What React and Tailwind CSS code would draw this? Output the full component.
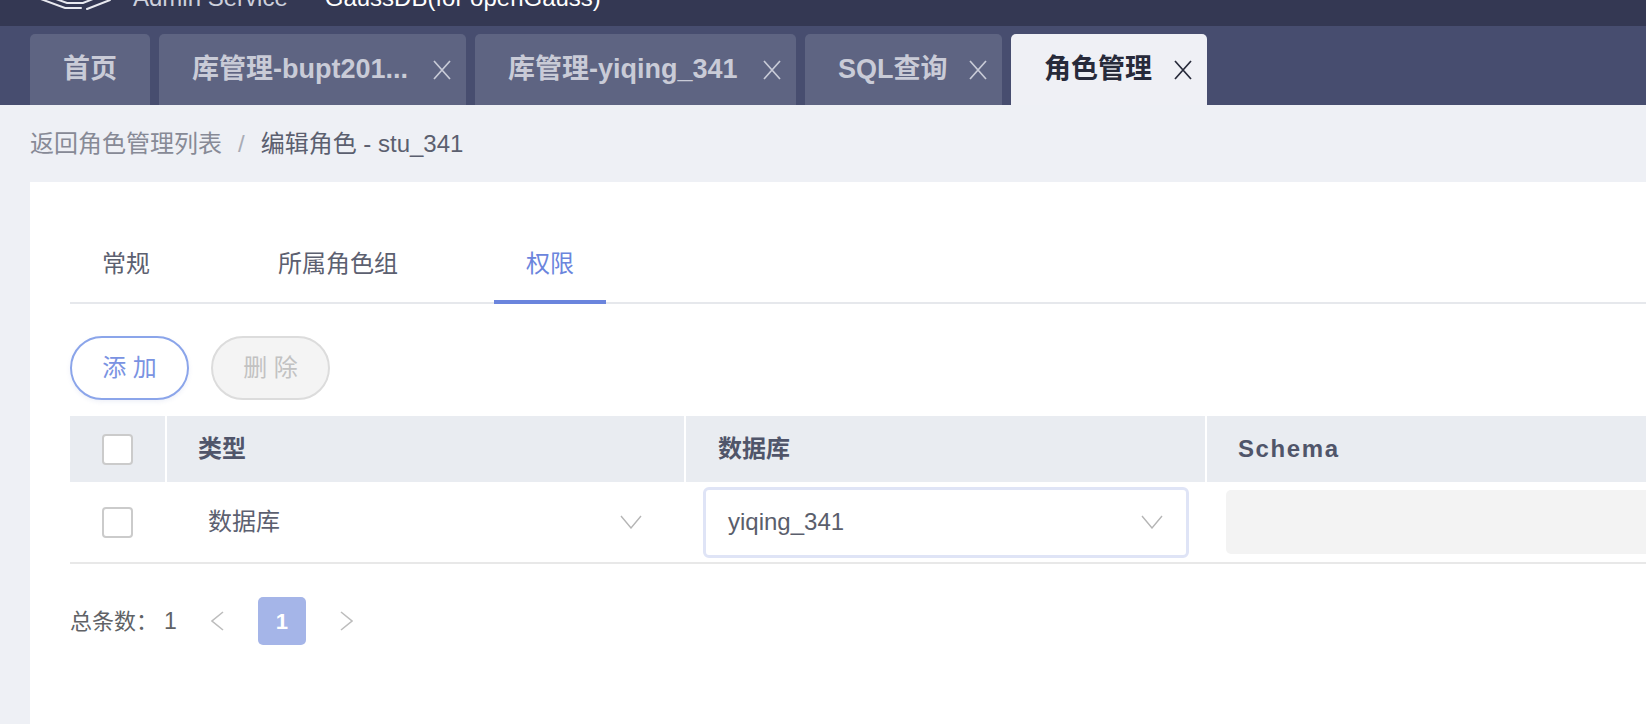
import React from 'react'

const FONT = "font-['Liberation_Sans','Noto_Sans_CJK_SC',sans-serif]"

const OPEN_TABS = [
  { label: '首页', width: 'w-[120px]', closable: false },
  { label: '库管理-bupt201...', width: 'w-[307px]', closable: true },
  { label: '库管理-yiqing_341', width: 'w-[321px]', closable: true },
  { label: 'SQL查询', width: 'w-[197px]', closable: true },
  { label: '角色管理', width: 'w-[196px]', closable: true, active: true },
]

const SUB_TABS = [
  { label: '常规' },
  { label: '所属角色组' },
  { label: '权限', active: true },
]

function CloseIcon() {
  return (
    <svg width="20" height="22" viewBox="0 0 20 22" className="shrink-0">
      <path d="M2 2 L18 20 M18 2 L2 20" stroke="currentColor" strokeWidth="1.7" fill="none" />
    </svg>
  )
}

function Chevron() {
  return (
    <svg width="22" height="14" viewBox="0 0 22 14" className="shrink-0">
      <polyline points="1,1 11,13 21,1" stroke="#b5b5b5" strokeWidth="1.4" fill="none" />
    </svg>
  )
}

function Arrow({ dir }) {
  return (
    <svg width="13" height="20" viewBox="0 0 13 20" className="shrink-0">
      <polyline
        points={dir === 'left' ? '12,1 1,10 12,19' : '1,1 12,10 1,19'}
        stroke="#bdbdbd"
        strokeWidth="1.6"
        fill="none"
      />
    </svg>
  )
}

function Checkbox() {
  return <span className="block w-[31px] h-[31px] rounded-[4px] border-2 border-[#cbcbcb] bg-white" />
}

function Logo() {
  // only the lower edge of the logo is visible in the header
  return (
    <svg width="74" height="24" viewBox="0 0 74 24" className="shrink-0">
      <path d="M1 12 L28 22 L44 22" stroke="#e8e9ef" strokeWidth="2" fill="none" strokeLinecap="round" />
      <path d="M50 23 L73 14" stroke="#e8e9ef" strokeWidth="2" fill="none" strokeLinecap="round" />
      <path d="M8 9 L30 17 L46 17 L66 9" stroke="#e8e9ef" strokeWidth="2" fill="none" strokeLinecap="round" />
    </svg>
  )
}

export default function App() {
  return (
    <div className={`w-[1646px] h-[724px] overflow-hidden flex flex-col bg-[#eef0f5] ${FONT}`}>
      <header className="h-[26px] shrink-0 bg-[#343853] overflow-hidden">
        <div className="-mt-[14px] flex items-start h-[24px]">
          <div className="ml-[37px]">
            <Logo />
          </div>
          <span className="ml-[22px] text-[24px] leading-[24px] text-[#cdd0dc] whitespace-nowrap">Admin Service</span>
          <span className="ml-[37px] text-[24px] leading-[24px] text-white whitespace-nowrap">GaussDB(for openGauss)</span>
        </div>
      </header>

      <nav className="h-[79px] shrink-0 bg-[#474d6f] flex items-end pl-[30px] gap-[9px]">
        {OPEN_TABS.map((tab) => (
          <div
            key={tab.label}
            className={`${tab.width} h-[71px] shrink-0 rounded-t-[5px] flex items-center pl-[33px] pr-[14px] font-bold text-[27px] whitespace-nowrap ${
              tab.active ? 'bg-[#eff0f5] text-[#272a3a]' : 'bg-[#5e6482] text-[#c9cbd7]'
            }`}
          >
            <span className="flex-1">{tab.label}</span>
            {tab.closable && <CloseIcon />}
          </div>
        ))}
      </nav>

      <div className="h-[77px] shrink-0 flex items-center pl-[30px] text-[24px] whitespace-nowrap">
        <span className="text-[#878a96]">返回角色管理列表</span>
        <span className="mx-[16px] text-[#a9acb6]">/</span>
        <span className="text-[#5b5f6f]">编辑角色 - stu_341</span>
      </div>

      <main className="flex-1 ml-[30px] bg-white pl-[40px] pt-[60px] overflow-hidden">
        <div className="flex border-b-2 border-[#e6e8ec]">
          {SUB_TABS.map((t, i) => (
            <div
              key={t.label}
              className={`-mb-[2px] border-b-4 px-8 pb-[15px] leading-[43px] text-[24px] whitespace-nowrap ${
                i > 0 ? 'ml-16' : ''
              } ${t.active ? 'border-[#6b85dd] text-[#6b85dd]' : 'border-transparent text-[#5c6070]'}`}
            >
              {t.label}
            </div>
          ))}
        </div>

        <div className="mt-[32px] flex gap-[22px]">
          <button className="h-[64px] w-[119px] rounded-full border-2 border-[#8ba5ea] bg-white text-[24px] text-[#7a93e2] shadow-[0_2px_4px_rgba(120,140,200,0.12)]">
            添 加
          </button>
          <button className="h-[64px] w-[119px] rounded-full border-2 border-[#dcdcdc] bg-[#f4f4f4] text-[24px] text-[#c2c2c2]">
            删 除
          </button>
        </div>

        <div className="mt-[16px] w-[1760px]">
          <div className="flex h-[66px] bg-[#e9ecf1] items-stretch font-bold text-[24px] text-[#50556a]">
            <div className="w-[95px] shrink-0 flex items-center justify-center">
              <Checkbox />
            </div>
            <div className="w-[519px] shrink-0 border-l-2 border-white flex items-center pl-[31px]">类型</div>
            <div className="w-[521px] shrink-0 border-l-2 border-white flex items-center pl-[32px]">数据库</div>
            <div className="w-[600px] shrink-0 border-l-2 border-white flex items-center pl-[31px] tracking-[1.6px]">
              Schema
            </div>
          </div>

          <div className="flex h-[82px] border-b-2 border-[#e8e8e8] items-center text-[24px]">
            <div className="w-[95px] shrink-0 flex items-center justify-center">
              <Checkbox />
            </div>
            <div className="w-[519px] shrink-0 flex items-center justify-between pl-[43px] pr-[42px] text-[#5c6070]">
              <span>数据库</span>
              <Chevron />
            </div>
            <div className="w-[521px] shrink-0 pl-[19px] pr-[16px]">
              <div className="h-[71px] rounded-[6px] border-[3px] border-[#dfe4f6] flex items-center justify-between pl-[22px] pr-[23px] text-[#5a5e6c]">
                <span>yiqing_341</span>
                <Chevron />
              </div>
            </div>
            <div className="w-[600px] shrink-0 pl-[21px]">
              <div className="h-[64px] rounded-[5px] bg-[#f3f3f3]" />
            </div>
          </div>
        </div>

        <div className="mt-[33px] h-[48px] flex items-center text-[22px] text-[#606266] whitespace-nowrap">
          <span>总条数：</span>
          <span className="ml-[6px] text-[23px]">1</span>
          <span className="ml-[34px]">
            <Arrow dir="left" />
          </span>
          <span className="ml-[34px] w-[48px] h-[48px] rounded-[5px] bg-[#a5b5e8] text-white font-bold flex items-center justify-center">
            1
          </span>
          <span className="ml-[34px]">
            <Arrow dir="right" />
          </span>
        </div>
      </main>
    </div>
  )
}
